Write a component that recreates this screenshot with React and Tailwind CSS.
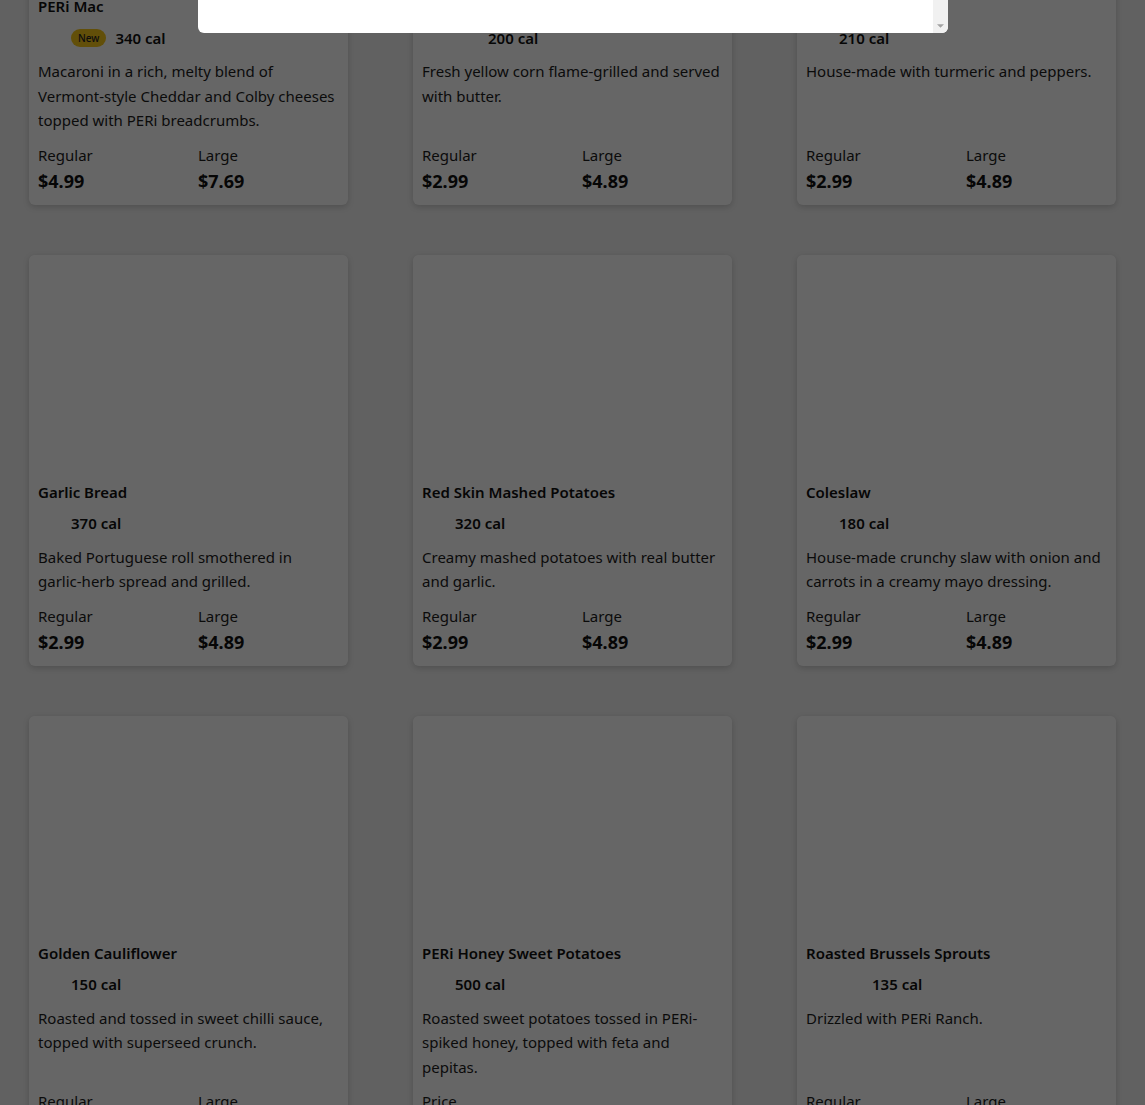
const sides = [
  {
    name: "PERi Mac",
    icons: 1,
    badge: "New",
    cal: "340 cal",
    text: "Macaroni in a rich, melty blend of Vermont-style Cheddar and Colby cheeses topped with PERi breadcrumbs.",
    prices: [
      { label: "Regular", value: "$4.99" },
      { label: "Large", value: "$7.69" },
    ],
  },
  {
    name: "Fire-Roasted Corn",
    icons: 2,
    cal: "200 cal",
    text: "Fresh yellow corn flame-grilled and served with butter.",
    prices: [
      { label: "Regular", value: "$2.99" },
      { label: "Large", value: "$4.89" },
    ],
  },
  {
    name: "Spicy Rice",
    icons: 1,
    cal: "210 cal",
    text: "House-made with turmeric and peppers.",
    prices: [
      { label: "Regular", value: "$2.99" },
      { label: "Large", value: "$4.89" },
    ],
  },
  {
    name: "Garlic Bread",
    icons: 1,
    cal: "370 cal",
    text: "Baked Portuguese roll smothered in garlic-herb spread and grilled.",
    prices: [
      { label: "Regular", value: "$2.99" },
      { label: "Large", value: "$4.89" },
    ],
  },
  {
    name: "Red Skin Mashed Potatoes",
    icons: 1,
    cal: "320 cal",
    text: "Creamy mashed potatoes with real butter and garlic.",
    prices: [
      { label: "Regular", value: "$2.99" },
      { label: "Large", value: "$4.89" },
    ],
  },
  {
    name: "Coleslaw",
    icons: 1,
    cal: "180 cal",
    text: "House-made crunchy slaw with onion and carrots in a creamy mayo dressing.",
    prices: [
      { label: "Regular", value: "$2.99" },
      { label: "Large", value: "$4.89" },
    ],
  },
  {
    name: "Golden Cauliflower",
    icons: 1,
    cal: "150 cal",
    text: "Roasted and tossed in sweet chilli sauce, topped with superseed crunch.",
    prices: [
      { label: "Regular", value: "$2.99" },
      { label: "Large", value: "$4.89" },
    ],
  },
  {
    name: "PERi Honey Sweet Potatoes",
    icons: 1,
    cal: "500 cal",
    text: "Roasted sweet potatoes tossed in PERi-spiked honey, topped with feta and pepitas.",
    prices: [{ label: "Price", value: "$4.49" }],
  },
  {
    name: "Roasted Brussels Sprouts",
    icons: 2,
    cal: "135 cal",
    text: "Drizzled with PERi Ranch.",
    prices: [
      { label: "Regular", value: "$2.99" },
      { label: "Large", value: "$4.89" },
    ],
  },
];

const SideCard = ({ item }) => (
  <article className="flex flex-col rounded-md bg-white shadow-[0_2px_6px_rgba(0,0,0,0.18)]">
    <div className="h-[216px] rounded-t-md bg-white" />
    <div className="flex flex-1 flex-col px-[9px] pt-[10px] pb-[11px]">
      <h3 className="text-[15px] font-semibold leading-[22px] text-[#111]">
        {item.name}
      </h3>
      <div className="mt-[10px] flex h-[22px] items-center gap-[9px]">
        {Array.from({ length: item.icons }).map((_, i) => (
          <span key={i} className="h-6 w-6" />
        ))}
        {item.badge && (
          <span className="rounded-full bg-[#f5c518] px-[7px] py-[2px] text-[10px] font-medium leading-[14px] text-[#222]">
            {item.badge}
          </span>
        )}
        <span className="text-[15px] font-semibold text-[#111]">{item.cal}</span>
      </div>
      <p className="mt-[10px] text-[15px] leading-[24.5px] text-[#1c1c1c]">
        {item.text}
      </p>
      <div className="mt-auto grid grid-cols-[160px_1fr] pt-[11px]">
        {item.prices.map((p) => (
          <div key={p.label}>
            <p className="text-[15px] leading-[22px] text-[#1c1c1c]">{p.label}</p>
            <p className="mt-[2px] text-[18px] font-bold leading-[26px] text-[#111]">
              {p.value}
            </p>
          </div>
        ))}
      </div>
    </div>
  </article>
);

const App = () => {
  return (
    <div className="relative h-[1105px] overflow-hidden bg-[#f2f2f2] font-['Noto_Sans',sans-serif]">
      <div className="-mt-[231px] grid grid-cols-3 gap-x-[65px] gap-y-[50px] px-[29px]">
        {sides.map((item) => (
          <SideCard key={item.name} item={item} />
        ))}
      </div>

      <div className="fixed inset-0 bg-black/60" />

      <div className="fixed left-1/2 top-0 flex h-[33px] w-[750px] -translate-x-1/2 overflow-hidden rounded-b-md bg-white">
        <div className="flex-1" />
        <div className="flex w-[15px] flex-col justify-end bg-[#f1f1f1] pb-[5px]">
          <svg viewBox="0 0 8 4" className="mx-auto h-[4px] w-[7px]">
            <path d="M0 0h8L4 4z" fill="#a3a3a3" />
          </svg>
        </div>
      </div>
    </div>
  );
};

export default App;
